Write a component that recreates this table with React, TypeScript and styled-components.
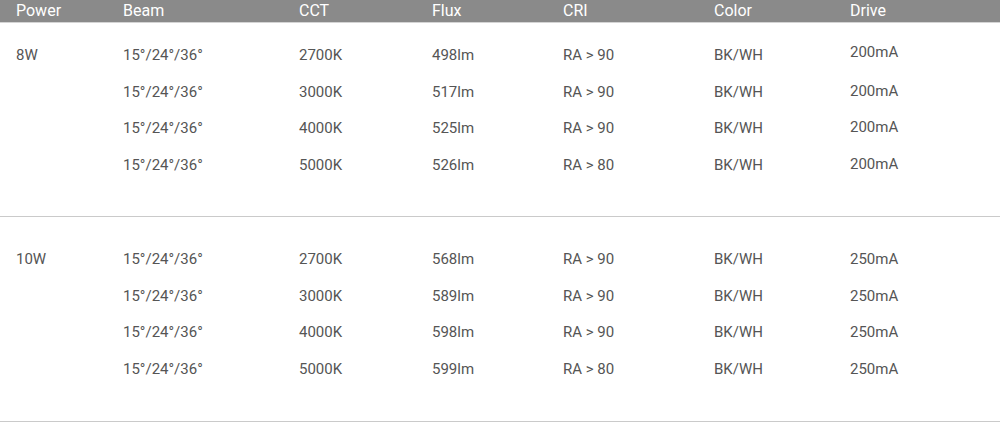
import React from "react";
import styled, { createGlobalStyle } from "styled-components";

const Global = createGlobalStyle`
  html, body { margin: 0; padding: 0; background: #ffffff; }
  body { font-family: Roboto, "Liberation Sans", Arial, sans-serif; }
`;

const cols = "107px 176px 133px 131px 151px 136px 1fr";

const Table = styled.div`
  width: 1000px;
  display: flex;
  flex-direction: column;
`;

const Header = styled.div`
  display: grid;
  grid-template-columns: ${cols};
  padding-left: 16px;
  height: 22px;
  background: #8a8a8a;
  border-bottom: 1px solid #d4d4d4;
  color: #ffffff;
  font-size: 16px;
  line-height: 22px;
  align-items: center;
`;

const HeaderCell = styled.div`
  white-space: nowrap;
`;

const Group = styled.div<{ $top: number; $bottom: number }>`
  display: flex;
  flex-direction: column;
  padding: ${(p) => p.$top}px 0 ${(p) => p.$bottom}px;
  border-bottom: 1px solid #cacaca;
`;

const Row = styled.div`
  display: grid;
  grid-template-columns: ${cols};
  padding-left: 16px;
  height: 36.5px;
  align-items: center;
  color: #555555;
  font-size: 15px;
  line-height: 18px;
`;

const Cell = styled.div<{ $lift?: number }>`
  white-space: nowrap;
  transform: translateY(${(p) => -(p.$lift ?? 0)}px);
`;

type Spec = { power: string; flux: string[]; cri: string[]; drive: string };

const groups: (Spec & { top: number; bottom: number })[] = [
  {
    power: "8W",
    flux: ["498lm", "517lm", "525lm", "526lm"],
    cri: ["RA > 90", "RA > 90", "RA > 90", "RA > 80"],
    drive: "200mA",
    top: 14,
    bottom: 33,
  },
  {
    power: "10W",
    flux: ["568lm", "589lm", "598lm", "599lm"],
    cri: ["RA > 90", "RA > 90", "RA > 90", "RA > 80"],
    drive: "250mA",
    top: 24,
    bottom: 34,
  },
];

const ccts = ["2700K", "3000K", "4000K", "5000K"];
const heads = ["Power", "Beam", "CCT", "Flux", "CRI", "Color", "Drive"];

export default function App() {
  return (
    <>
      <Global />
      <Table>
        <Header>
          {heads.map((h) => (
            <HeaderCell key={h}>{h}</HeaderCell>
          ))}
        </Header>
        {groups.map((g, gi) => (
          <Group key={g.power} $top={g.top} $bottom={g.bottom}>
            {ccts.map((c, i) => (
              <Row key={c}>
                <Cell>{i === 0 ? g.power : ""}</Cell>
                <Cell>15°/24°/36°</Cell>
                <Cell>{c}</Cell>
                <Cell>{g.flux[i]}</Cell>
                <Cell>{g.cri[i]}</Cell>
                <Cell>BK/WH</Cell>
                <Cell $lift={gi === 0 ? (i === 0 ? 3 : 1) : 0}>{g.drive}</Cell>
              </Row>
            ))}
          </Group>
        ))}
      </Table>
    </>
  );
}
